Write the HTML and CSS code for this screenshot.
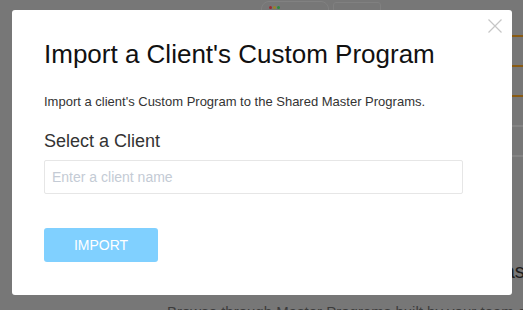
FILE: index.html
```html
<!DOCTYPE html>
<html lang="en">
<head>
  <meta charset="UTF-8">
  <title>Import a Client's Custom Program</title>
  <link rel="stylesheet" href="styles.css">
</head>
<body>
  <div class="page">
    <div class="topbar">
      <div class="app-window">
        <span class="dot red"></span>
        <span class="dot yellow"></span>
        <span class="dot green"></span>
      </div>
      <div class="app-tab"></div>
    </div>
    <div class="main">
      <div class="content">
        <h2 class="page-title">Shared Master Programs</h2>
        <p class="page-desc">Browse through Master Programs built by your team or clients</p>
      </div>
      <div class="rail">
        <div class="rail-line accent"></div>
        <div class="rail-line accent"></div>
        <div class="rail-line accent"></div>
        <div class="rail-line"></div>
        <div class="rail-line"></div>
      </div>
    </div>
  </div>

  <div class="overlay">
    <div class="modal">
      <button class="close-btn" aria-label="Close">
        <svg width="14" height="14" viewBox="0 0 14 14">
          <path d="M0.5 0.5 L13.5 13.5 M13.5 0.5 L0.5 13.5" stroke="#c6c6c6" stroke-width="1.2" fill="none"/>
        </svg>
      </button>
      <h1 class="modal-title">Import a Client's Custom Program</h1>
      <p class="modal-desc">Import a client's Custom Program to the Shared Master Programs.</p>
      <label class="field-label" for="clientName">Select a Client</label>
      <input class="client-input" id="clientName" type="text" placeholder="Enter a client name">
      <button class="import-btn">IMPORT</button>
    </div>
  </div>
</body>
</html>
```

FILE: styles.css
```css
* {
  box-sizing: border-box;
  font-family: 'Liberation Sans', Arial, sans-serif;
}
body {
  margin: 0;
  background: #777;
  overflow: hidden;
  height: 310px;
}
.topbar {
  display: flex;
  height: 10px;
  padding-left: 261px;
  gap: 4px;
  overflow: hidden;
}
.app-window {
  width: 68px;
  height: 18px;
  margin-top: 1px;
  border: 1px solid #818181;
  border-radius: 8px 8px 0 0;
  display: flex;
  gap: 1px;
  padding: 4px 0 0 7px;
}
.dot {
  width: 3px;
  height: 3px;
  border-radius: 50%;
}
.dot.red { background: #9a2b33; }
.dot.yellow { background: #9a8228; }
.dot.green { background: #2c8a3e; }
.app-tab {
  width: 48px;
  height: 18px;
  margin-top: 2px;
  border: 1px solid #808080;
  border-radius: 3px;
  padding: 3px;
}
.main {
  display: flex;
}
.content {
  flex: none;
  width: 500px;
  padding: 250px 0 0 167px;
}
.page-title {
  margin: 0;
  font-size: 20px;
  font-weight: normal;
  color: #1f1f1f;
  white-space: nowrap;
  padding-left: 250px;
}
.page-desc {
  margin: 20px 0 0;
  font-size: 15px;
  color: #3c3c3c;
  white-space: nowrap;
}
.rail {
  flex: 1;
  display: flex;
  flex-direction: column;
  padding-top: 25px;
  gap: 28px;
}
.rail-line {
  height: 2px;
  background: #848484;
}
.rail-line.accent {
  background: #8a5b12;
}

.overlay {
  position: fixed;
  top: 0;
  left: 0;
  right: 0;
  bottom: 0;
  padding: 10px 0 0 12px;
}
.modal {
  position: relative;
  width: 500px;
  height: 285px;
  background: #fff;
  border-radius: 3px;
  padding: 29px 32px 0;
  display: flex;
  flex-direction: column;
  align-items: flex-start;
}
.close-btn {
  position: absolute;
  top: 9px;
  right: 10px;
  width: 14px;
  height: 14px;
  padding: 0;
  border: none;
  background: none;
  cursor: pointer;
  display: flex;
}
.modal-title {
  margin: 0;
  font-size: 26px;
  line-height: 30px;
  font-weight: normal;
  color: #111;
}
.modal-desc {
  margin: 25px 0 0;
  font-size: 13px;
  line-height: 16px;
  color: #333;
}
.field-label {
  margin-top: 21px;
  font-size: 18px;
  line-height: 21px;
  color: #333;
}
.client-input {
  margin-top: 8px;
  width: 419px;
  height: 34px;
  border: 1px solid #e6e6e6;
  border-radius: 2px;
  padding: 0 7px;
  font-size: 14px;
  color: #333;
  outline: none;
}
.client-input::placeholder {
  color: #c4cbd5;
}
.import-btn {
  margin-top: 34px;
  width: 114px;
  height: 34px;
  background: #80d0ff;
  border: none;
  border-radius: 3px;
  color: #fff;
  font-size: 14px;
  cursor: pointer;
}
```
